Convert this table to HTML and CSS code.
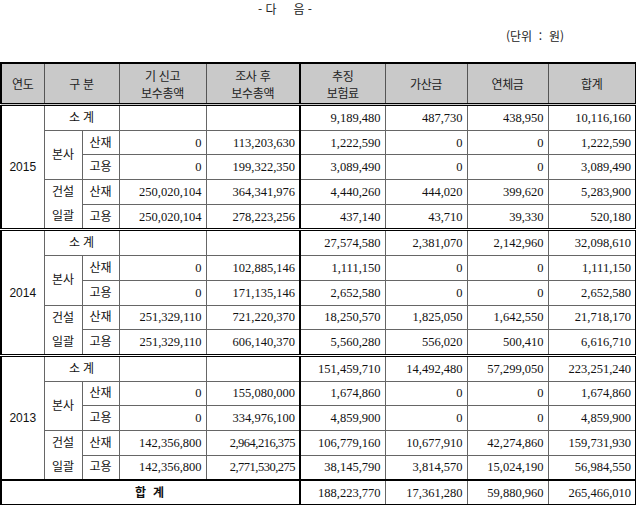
FILE: index.html
```html
<!DOCTYPE html>
<html lang="ko">
<head>
<meta charset="utf-8">
<title>다음</title>
<link rel="stylesheet" href="styles.css">
</head>
<body>
<div class="title">- 다&nbsp;&nbsp;&nbsp;&nbsp;&nbsp;음 -</div>
<div class="unit">(단위&nbsp;&nbsp;:&nbsp;&nbsp;원)</div>
<table class="grid">
  <colgroup>
    <col class="w-year"><col class="w-g1"><col class="w-g2"><col class="w-prev"><col class="w-after"><col class="w-ins"><col class="w-add"><col class="w-late"><col class="w-sum">
  </colgroup>
  <thead>
    <tr>
      <th>연도</th>
      <th colspan="2">구 분</th>
      <th>기 신고<br>보수총액</th>
      <th class="sep">조사 후<br>보수총액</th>
      <th>추징<br>보험료</th>
      <th>가산금</th>
      <th>연체금</th>
      <th>합계</th>
    </tr>
  </thead>
  <tbody>
    <tr class="first">
      <td rowspan="5" class="year">2015</td>
      <td colspan="2" class="c">소 계</td>
      <td></td><td class="sep"></td>
      <td class="n">9,189,480</td><td class="n">487,730</td><td class="n">438,950</td><td class="n">10,116,160</td>
    </tr>
    <tr>
      <td rowspan="2" class="c">본사</td><td class="c">산재</td>
      <td class="n">0</td><td class="n sep">113,203,630</td>
      <td class="n">1,222,590</td><td class="n">0</td><td class="n">0</td><td class="n">1,222,590</td>
    </tr>
    <tr>
      <td class="c">고용</td>
      <td class="n">0</td><td class="n sep">199,322,350</td>
      <td class="n">3,089,490</td><td class="n">0</td><td class="n">0</td><td class="n">3,089,490</td>
    </tr>
    <tr>
      <td rowspan="2" class="c two">건설<br>일괄</td><td class="c">산재</td>
      <td class="n">250,020,104</td><td class="n sep">364,341,976</td>
      <td class="n">4,440,260</td><td class="n">444,020</td><td class="n">399,620</td><td class="n">5,283,900</td>
    </tr>
    <tr>
      <td class="c">고용</td>
      <td class="n">250,020,104</td><td class="n sep">278,223,256</td>
      <td class="n">437,140</td><td class="n">43,710</td><td class="n">39,330</td><td class="n">520,180</td>
    </tr>

    <tr class="first">
      <td rowspan="5" class="year">2014</td>
      <td colspan="2" class="c">소 계</td>
      <td></td><td class="sep"></td>
      <td class="n">27,574,580</td><td class="n">2,381,070</td><td class="n">2,142,960</td><td class="n">32,098,610</td>
    </tr>
    <tr>
      <td rowspan="2" class="c">본사</td><td class="c">산재</td>
      <td class="n">0</td><td class="n sep">102,885,146</td>
      <td class="n">1,111,150</td><td class="n">0</td><td class="n">0</td><td class="n">1,111,150</td>
    </tr>
    <tr>
      <td class="c">고용</td>
      <td class="n">0</td><td class="n sep">171,135,146</td>
      <td class="n">2,652,580</td><td class="n">0</td><td class="n">0</td><td class="n">2,652,580</td>
    </tr>
    <tr>
      <td rowspan="2" class="c two">건설<br>일괄</td><td class="c">산재</td>
      <td class="n">251,329,110</td><td class="n sep">721,220,370</td>
      <td class="n">18,250,570</td><td class="n">1,825,050</td><td class="n">1,642,550</td><td class="n">21,718,170</td>
    </tr>
    <tr>
      <td class="c">고용</td>
      <td class="n">251,329,110</td><td class="n sep">606,140,370</td>
      <td class="n">5,560,280</td><td class="n">556,020</td><td class="n">500,410</td><td class="n">6,616,710</td>
    </tr>

    <tr class="first">
      <td rowspan="5" class="year">2013</td>
      <td colspan="2" class="c">소 계</td>
      <td></td><td class="sep"></td>
      <td class="n">151,459,710</td><td class="n">14,492,480</td><td class="n">57,299,050</td><td class="n">223,251,240</td>
    </tr>
    <tr>
      <td rowspan="2" class="c">본사</td><td class="c">산재</td>
      <td class="n">0</td><td class="n sep">155,080,000</td>
      <td class="n">1,674,860</td><td class="n">0</td><td class="n">0</td><td class="n">1,674,860</td>
    </tr>
    <tr>
      <td class="c">고용</td>
      <td class="n">0</td><td class="n sep">334,976,100</td>
      <td class="n">4,859,900</td><td class="n">0</td><td class="n">0</td><td class="n">4,859,900</td>
    </tr>
    <tr>
      <td rowspan="2" class="c two">건설<br>일괄</td><td class="c">산재</td>
      <td class="n">142,356,800</td><td class="n sep tight">2,964,216,375</td>
      <td class="n">106,779,160</td><td class="n">10,677,910</td><td class="n">42,274,860</td><td class="n">159,731,930</td>
    </tr>
    <tr>
      <td class="c">고용</td>
      <td class="n">142,356,800</td><td class="n sep tight">2,771,530,275</td>
      <td class="n">38,145,790</td><td class="n">3,814,570</td><td class="n">15,024,190</td><td class="n">56,984,550</td>
    </tr>

    <tr class="total">
      <td colspan="5" class="c sep">합 계</td>
      <td class="n">188,223,770</td><td class="n">17,361,280</td><td class="n">59,880,960</td><td class="n">265,466,010</td>
    </tr>
  </tbody>
</table>
</body>
</html>
```

FILE: styles.css
```css
html, body {
  margin: 0;
  padding: 0;
  background: #ffffff;
  color: #111111;
  font-family: "Noto Sans CJK KR", "Noto Sans", sans-serif;
}

.title {
  padding-top: 1px;
  height: 15px;
  line-height: 15px;
  font-size: 12px;
  text-align: center;
  padding-right: 66px;
  color: #222;
}

.unit {
  margin-top: 13px;
  height: 14px;
  line-height: 14px;
  font-size: 12px;
  text-align: right;
  padding-right: 72px;
  color: #222;
}

.grid {
  margin-top: 19px;
  width: 635px;
  border-collapse: collapse;
  table-layout: fixed;
  border: 2px solid #000;
}

.w-year { width: 43px; }
.w-g1 { width: 38px; }
.w-g2 { width: 37px; }
.w-prev { width: 87px; }
.w-after { width: 94px; }
.w-ins { width: 85px; }
.w-add { width: 82px; }
.w-late { width: 81px; }
.w-sum { width: 88px; }

.grid th {
  height: 39px;
  padding: 0;
  background: #c9c9c9;
  font-weight: normal;
  font-size: 12px;
  line-height: 17px;
  letter-spacing: -0.3px;
  color: #222;
  border: 1px solid #555;
  border-bottom: 3px double #000;
  text-align: center;
}

.grid td {
  height: 23.7px;
  padding: 0 4px 0 2px;
  font-family: "Liberation Serif", "Noto Sans CJK KR", serif;
  font-size: 12.5px;
  line-height: 14px;
  border: 1px solid #666;
  white-space: nowrap;
  overflow: hidden;
}

.grid td.c {
  text-align: center;
  padding: 0;
  font-size: 12px;
}

.grid td.two {
  line-height: 24px;
}

.grid td.n {
  text-align: right;
}

.grid td.tight {
  letter-spacing: -0.5px;
}

.grid td.year {
  text-align: center;
  padding: 0;
  font-family: "Liberation Sans", "Noto Sans", sans-serif;
  font-size: 12px;
}

.grid .sep {
  border-right: 2px solid #000;
}

.grid tr.first td {
  border-top: 3px double #000;
}

.grid tr.total td {
  border-top: 2px solid #000;
  height: 23px;
}

.grid tr.total td.c {
  font-weight: bold;
  letter-spacing: 2px;
}
```
